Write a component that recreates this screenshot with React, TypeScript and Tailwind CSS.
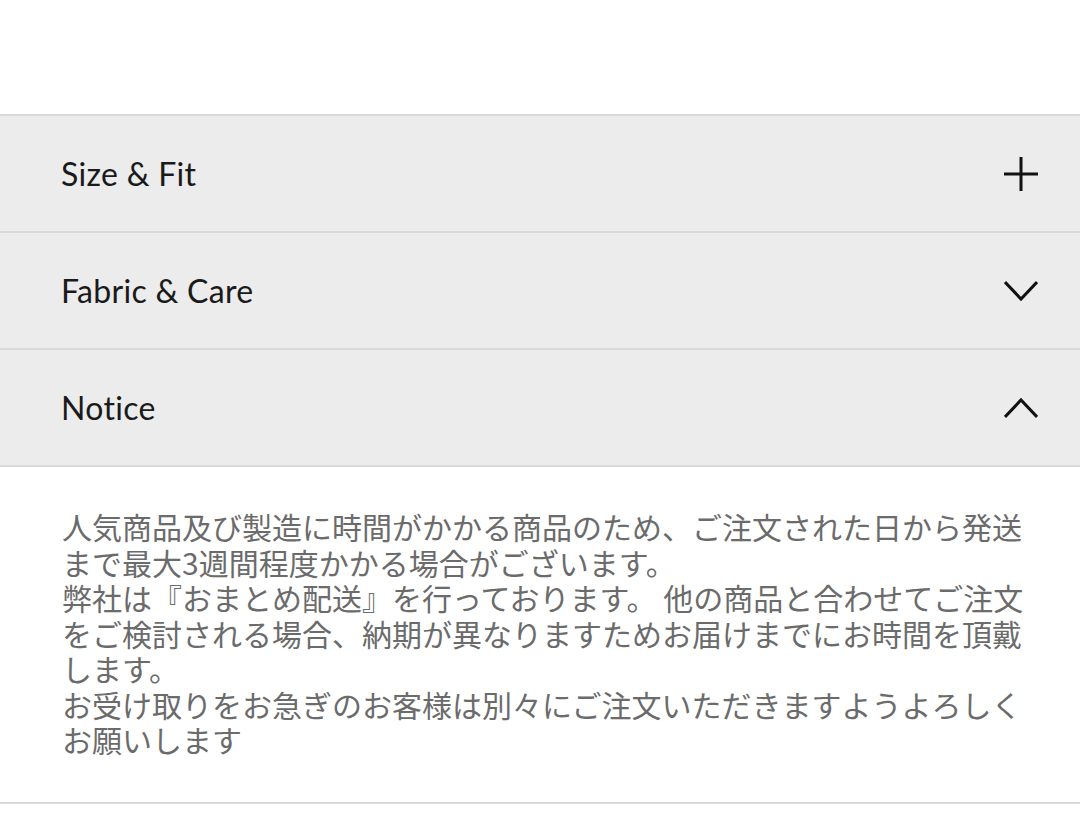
import React from "react";

type Section = {
  title: string;
  icon: "plus" | "down" | "up";
};

const sections: Section[] = [
  { title: "Size & Fit", icon: "plus" },
  { title: "Fabric & Care", icon: "down" },
  { title: "Notice", icon: "up" },
];

const Icon: React.FC<{ kind: Section["icon"] }> = ({ kind }) => {
  if (kind === "plus") {
    return (
      <svg width="34" height="34" viewBox="0 0 34 34" fill="none" stroke="#111" strokeWidth="3">
        <path d="M17 0v34M0 17h34" />
      </svg>
    );
  }
  return (
    <svg width="34" height="22" viewBox="0 0 34 22" fill="none" stroke="#111" strokeWidth="3" strokeLinejoin="miter">
      {kind === "down" ? <path d="M1 2l16 17L33 2" /> : <path d="M1 20L17 3l16 17" />}
    </svg>
  );
};

const App: React.FC = () => {
  return (
    <div className="min-h-[838px] w-[1080px] bg-white">
      <div className="h-[114px]" />
      <div className="border-t-2 border-[#d9d9d9]">
        {sections.map((s) => (
          <div
            key={s.title}
            className="flex h-[117px] items-center justify-between border-b-2 border-[#d9d9d9] bg-[#ebeceb] pl-[61px] pr-[42px]"
          >
            <div
              className="text-[32px] font-normal tracking-[0.3px] text-[#1a1a1a]"
              style={{ fontFamily: "Lato, sans-serif" }}
            >
              {s.title}
            </div>
            <Icon kind={s.icon} />
          </div>
        ))}
        <div
          className="border-b-2 border-[#d9d9d9] pb-[44px] pl-[62px] pr-[40px] pt-[42px] text-[30px] leading-[35.5px] text-[#6b6b6b]"
          style={{ fontFamily: '"Noto Sans CJK JP", sans-serif' }}
        >
          <p>人気商品及び製造に時間がかかる商品のため、ご注文された日から発送まで最大3週間程度かかる場合がございます。</p>
          <p>弊社は『おまとめ配送』を行っております。 他の商品と合わせてご注文をご検討される場合、納期が異なりますためお届けまでにお時間を頂戴します。</p>
          <p>お受け取りをお急ぎのお客様は別々にご注文いただきますようよろしくお願いします</p>
        </div>
      </div>
    </div>
  );
};

export default App;
